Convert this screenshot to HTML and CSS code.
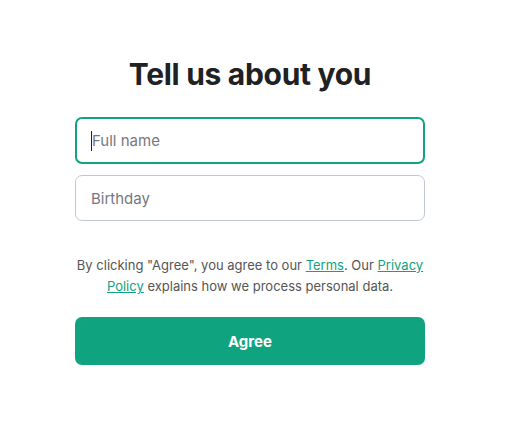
FILE: index.html
```html
<!DOCTYPE html>
<html lang="en">
<head>
    <meta charset="UTF-8">
    <meta name="viewport" content="width=device-width, initial-scale=1.0">
    <title>Tell us about you</title>
    <link rel="stylesheet" href="styles.css">
</head>
<body>

    <div class="about">
        <h1>Tell us about you</h1>

        <div class="field focused">
            <span class="caret"></span><span class="placeholder">Full name</span>
        </div>

        <div class="field">
            <span class="placeholder">Birthday</span>
        </div>

        <p class="legal">
            By clicking "Agree", you agree to our <a href="#">Terms</a>. Our <a href="#">Privacy Policy</a> explains how we process personal data.
        </p>

        <button class="agree">Agree</button>
    </div>

</body>
</html>
```

FILE: styles.css
```css
body {
    font-family: Inter, "Liberation Sans", Arial, sans-serif;
    margin: 0;
    padding: 0 24px 0 0;
    background-color: #ffffff;
}

.about {
    width: 350px;
    margin: 0 auto;
    padding-top: 55px;
    display: flex;
    flex-direction: column;
}

.about h1 {
    margin: 0 0 24px;
    text-align: center;
    font-size: 30px;
    font-weight: 700;
    letter-spacing: -0.3px;
    color: #202123;
    line-height: 38px;
}

.field {
    height: 46px;
    box-sizing: border-box;
    border: 1px solid #c2c8d0;
    border-radius: 7px;
    display: flex;
    align-items: center;
    padding: 0 15px;
    margin-bottom: 12px;
    font-size: 15px;
}

.field.focused {
    height: 47px;
    margin-bottom: 11px;
    border: 2px solid #10a37f;
    padding: 0 14px;
}

.placeholder {
    color: #77777f;
}

.caret {
    width: 1px;
    height: 20px;
    background-color: #202123;
}

.legal {
    margin: 22px 0 0;
    text-align: center;
    font-size: 13px;
    line-height: 21px;
    color: #555;
}

.legal a {
    color: #10a37f;
}

.agree {
    margin-top: 20px;
    height: 48px;
    border: none;
    border-radius: 7px;
    background-color: #10a37f;
    color: white;
    font-family: inherit;
    font-size: 15px;
    font-weight: 700;
    cursor: pointer;
}
```
